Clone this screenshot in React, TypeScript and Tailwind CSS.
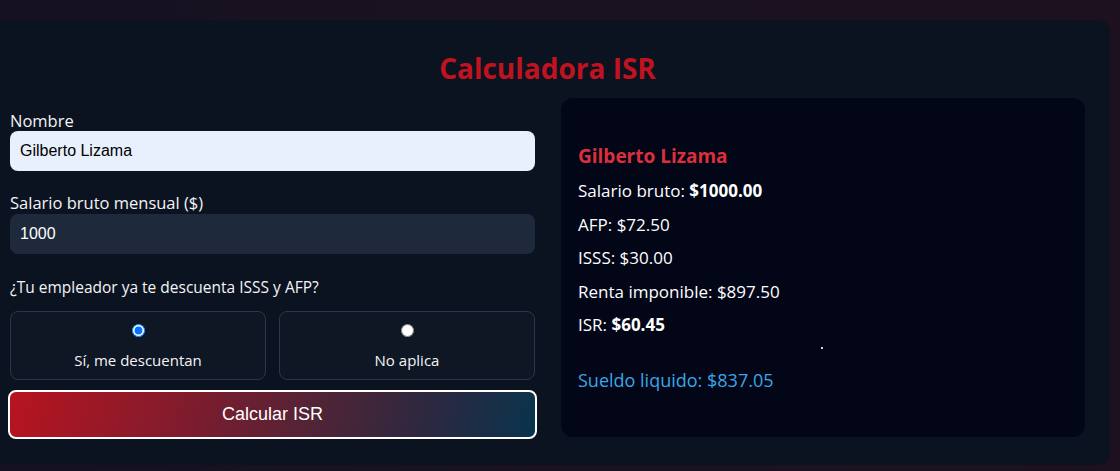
import React, { useState } from "react";

// Calculadora ISR — dark card with form on the left, results on the right

const font = { fontFamily: "'Open Sans', 'Noto Sans', sans-serif" };
const arial = { fontFamily: "'Liberation Sans', Arial, sans-serif" };

const Label = ({ children, className = "" }) => (
  <label className={`block text-[16.5px] leading-[20px] text-gray-100 ${className}`}>
    {children}
  </label>
);

const RadioCard = ({ checked, label, onChange }) => (
  <label className="flex-1 h-[69px] flex flex-col items-center pt-[12px] rounded-lg border border-[#2c3647] bg-[#0f1624] cursor-pointer">
    <input
      type="radio"
      checked={checked}
      onChange={onChange}
      className="w-[13px] h-[13px] m-0"
    />
    <span className="mt-[13px] text-[15px] leading-[20px] text-gray-100">{label}</span>
  </label>
);

export default function App() {
  const [nombre, setNombre] = useState("Gilberto Lizama");
  const [salario, setSalario] = useState("1000");
  const [descuenta, setDescuenta] = useState(true);

  return (
    <div
      className="w-[1120px] h-[471px] overflow-hidden bg-gradient-to-r from-[#151120] via-[#1a1221] to-[#1d111f] pt-[20px]"
      style={font}
    >
      <div className="ml-[-20px] w-[1130px] h-[445px] rounded-xl bg-[#0c1320] pl-[30px] pr-[25px] pt-[30px]">
        <h1 className="text-center text-[28px] leading-[36px] font-bold text-[#c1121f]">
          Calculadora ISR
        </h1>

        <div className="mt-[12px] grid grid-cols-[525px_524px] gap-[26px]">
          {/* form */}
          <div className="pt-[13px]">
            <Label>Nombre</Label>
            <input
              value={nombre}
              onChange={(e) => setNombre(e.target.value)}
              className="block w-full h-[40px] rounded-lg bg-[#e8f0fe] px-[10px] text-[16px] text-black outline-none"
              style={arial}
            />

            <Label className="mt-[22px] mb-[1px]">Salario bruto mensual ($)</Label>
            <input
              value={salario}
              onChange={(e) => setSalario(e.target.value)}
              className="block w-full h-[40px] rounded-lg bg-[#1e293b] px-[10px] text-[16px] text-white outline-none"
              style={arial}
            />

            <p className="mt-[23px] text-[15.5px] leading-[20px] text-gray-100">
              ¿Tu empleador ya te descuenta ISSS y AFP?
            </p>

            <div className="mt-[14px] flex gap-[13px]">
              <RadioCard
                checked={descuenta}
                label="Sí, me descuentan"
                onChange={() => setDescuenta(true)}
              />
              <RadioCard
                checked={!descuenta}
                label="No aplica"
                onChange={() => setDescuenta(false)}
              />
            </div>

            <button
              className="mt-[10px] ml-[-2px] w-[529px] h-[49px] rounded-lg border-2 border-white bg-[linear-gradient(105deg,#b8141f_0%,#7d1c2e_35%,#4a2538_62%,#2a2840_80%,#08344c_100%)] text-[18px] text-white"
              style={arial}
            >
              Calcular ISR
            </button>
          </div>

          {/* resultado */}
          <div className="h-[339px] rounded-xl bg-[#020617] pl-[17px] pt-[47px]">
            <h2 className="text-[19px] leading-[22px] font-bold text-[#dc2f3d]">{nombre}</h2>
            <div className="mt-[12px] flex flex-col gap-[9.5px] text-[17px] leading-[24px] text-white">
              <p>
                Salario bruto: <b>$1000.00</b>
              </p>
              <p>AFP: $72.50</p>
              <p>ISSS: $30.00</p>
              <p>Renta imponible: $897.50</p>
              <p>
                ISR: <b>$60.45</b>
              </p>
            </div>
            <div className="mt-[10px] ml-[243px] w-[2px] h-[2px] bg-gray-300" />
            <p className="mt-[18px] text-[18px] leading-[26px] text-[#3aa6e6]">
              Sueldo liquido: $837.05
            </p>
          </div>
        </div>
      </div>
    </div>
  );
}
